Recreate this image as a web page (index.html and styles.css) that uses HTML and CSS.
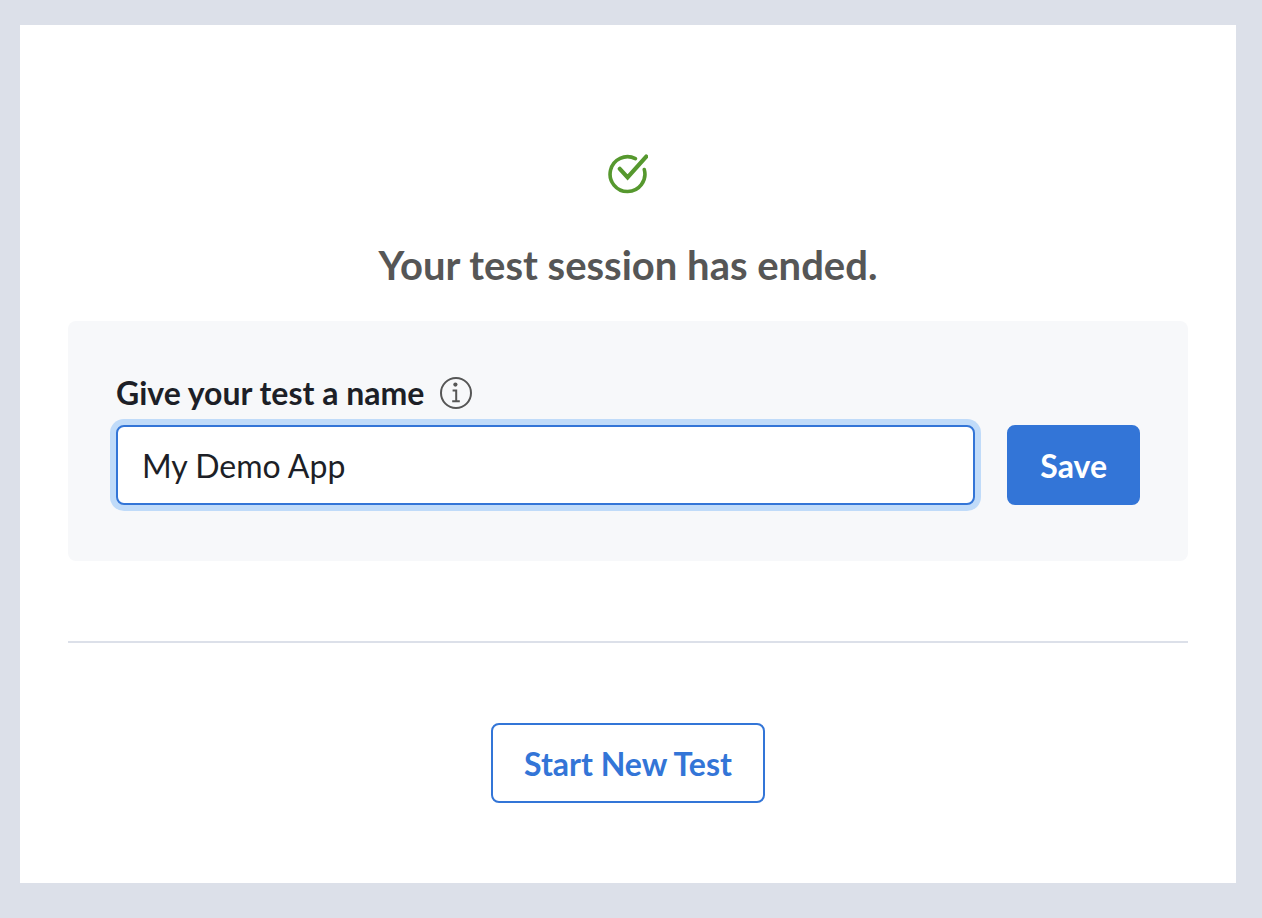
FILE: index.html
```html
<!DOCTYPE html>
<html lang="en">
<head>
  <meta charset="utf-8">
  <meta name="viewport" content="width=device-width, initial-scale=1">
  <title>Test session ended</title>
  <link rel="stylesheet" href="styles.css">
</head>
<body class="page">
  <main class="card">
    <svg class="status-icon" viewBox="0 0 40 40" fill="none" stroke="currentColor" stroke-linecap="round" aria-hidden="true">
      <path d="M27.4 4.6A17.4 17.4 0 1 0 36.3 15.6" stroke-width="3.6"/>
      <path d="M11.8 14.8L19.6 23.4L38.2 2.6" stroke-width="4.2" stroke-linejoin="miter"/>
    </svg>
    <h1 class="title">Your test session has ended.</h1>
    <form class="panel">
      <div class="label-row">
        <label class="label" for="test-name">Give your test a name</label>
        <svg class="info-icon" viewBox="0 0 32 32" fill="none" stroke="currentColor" aria-hidden="true">
          <circle cx="16" cy="16" r="15" stroke-width="2"/>
          <circle cx="15.4" cy="7.6" r="2.1" fill="currentColor" stroke="none"/>
          <path d="M12.6 13.4H16.2V24.2M12.2 24.2H19.8" stroke-width="2"/>
        </svg>
      </div>
      <div class="field-row">
        <input class="input" id="test-name" type="text" value="My Demo App">
        <button class="button button-primary" type="button">Save</button>
      </div>
    </form>
    <hr class="divider">
    <button class="button button-outline" type="button">Start New Test</button>
  </main>
</body>
</html>
```
FILE: styles.css
```css
* {
  box-sizing: border-box;
}

.page {
  margin: 0;
  padding: 25px 26px 35px 20px;
  min-height: 100vh;
  display: flex;
  background: #dce0e9;
  font-family: Lato, "Liberation Sans", sans-serif;
  color: #1d1f27;
}

.card {
  flex: 1;
  display: flex;
  flex-direction: column;
  align-items: center;
  padding: 129px 48px 80px;
  background: #fff;
}

.status-icon {
  width: 40px;
  height: 40px;
  color: #56982e;
}

.title {
  margin: 47px 0 32px;
  font-size: 40px;
  line-height: 48px;
  font-weight: 700;
  color: #565656;
}

.panel {
  align-self: stretch;
  padding: 48px 48px 56px;
  border-radius: 8px;
  background: #f7f8fa;
}

.label-row {
  display: flex;
  align-items: center;
  gap: 16px;
  margin-bottom: 8px;
}

.label {
  font-size: 32px;
  line-height: 48px;
  font-weight: 700;
}

.info-icon {
  width: 32px;
  height: 32px;
  color: #565656;
}

.field-row {
  display: flex;
  gap: 32px;
}

.input {
  flex: 1;
  min-width: 0;
  height: 80px;
  padding: 0 24px;
  border: 2px solid #3375d7;
  border-radius: 8px;
  outline: none;
  box-shadow: 0 0 0 6px #c0dbf9;
  background: #fff;
  font: inherit;
  font-size: 32px;
  color: inherit;
}

.button {
  height: 80px;
  padding: 0 31px;
  border: 2px solid #3375d7;
  border-radius: 8px;
  font: inherit;
  font-size: 32px;
  font-weight: 700;
  cursor: pointer;
}

.button-primary {
  background: #3375d7;
  color: #fff;
}

.button-outline {
  background: #fff;
  color: #3375d7;
}

.divider {
  align-self: stretch;
  margin: 80px 0;
  border: 0;
  border-top: 2px solid #dce0e9;
}
```
